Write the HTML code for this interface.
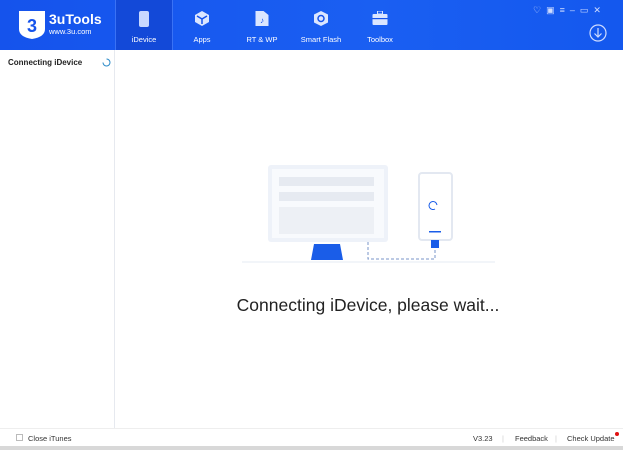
<!DOCTYPE html>
<html><head><style>
*{margin:0;padding:0;box-sizing:border-box}
body{width:623px;height:450px;overflow:hidden;background:#fff;font-family:"Liberation Sans",sans-serif;position:relative}
.hdr{position:absolute;left:0;top:0;width:623px;height:50px;background:linear-gradient(90deg,#1553ec,#1a5ff2 60%,#1458ee)}
.tab{position:absolute;top:0;height:50px;color:#fff;font-size:7.5px;text-align:center}
.tab span{position:absolute;top:35px;left:0;right:0}
.ic{position:absolute;top:11px;left:50%;transform:translateX(-50%)}
.side{position:absolute;left:0;top:50px;width:115px;height:378px;border-right:1px solid #e6e9ef}
.foot{position:absolute;left:0;top:428px;width:623px;height:18px;border-top:1px solid #eee;font-size:7.5px;color:#333}
.shadow{position:absolute;left:0;top:446px;width:623px;height:4px;background:#d8d8d8}
</style></head><body>
<div class="hdr">
 <svg style="position:absolute;left:18px;top:10px" width="28" height="30" viewBox="0 0 28 30"><path d="M1 1H27V19Q27 27 14 29Q1 27 1 19Z" fill="#fff"/><text x="14" y="22" font-size="18" font-weight="bold" fill="#1553ec" text-anchor="middle" font-family="Liberation Sans">3</text></svg>
 <div style="position:absolute;left:49px;top:11px;color:#fff;font-weight:bold;font-size:14px">3uTools</div>
 <div style="position:absolute;left:49px;top:27px;color:#fff;font-size:7.5px">www.3u.com</div>
 <div class="tab" style="left:115px;width:58px;background:#1349d8;border-left:1px solid #3a72f5;border-right:1px solid #3a72f5"><svg class="ic" width="10" height="16"><rect x="0" y="0" width="10" height="16" rx="2" fill="#c8d8ff"/></svg><span>iDevice</span></div>
 <div class="tab" style="left:178px;width:48px"><svg class="ic" width="14" height="15" viewBox="0 0 14 15"><path d="M7 0L14 4V11L7 15L0 11V4Z" fill="#dbe6ff"/><path d="M2 5L7 8L12 5M7 8V13" stroke="#1553ec" stroke-width="1.5" fill="none"/></svg><span>Apps</span></div>
 <div class="tab" style="left:236px;width:52px"><svg class="ic" width="13" height="15"><path d="M0 0H8L13 4V15H0Z" fill="#dbe6ff"/><text x="6.5" y="12" font-size="8" fill="#1553ec" text-anchor="middle">♪</text></svg><span>RT &amp; WP</span></div>
 <div class="tab" style="left:296px;width:50px"><svg class="ic" width="14" height="15" viewBox="0 0 14 15"><path d="M7 0L14 3.5V11.5L7 15L0 11.5V3.5Z" fill="#dbe6ff"/><circle cx="7" cy="7.5" r="3" fill="none" stroke="#1553ec" stroke-width="1.5"/></svg><span>Smart Flash</span></div>
 <div class="tab" style="left:360px;width:40px"><svg class="ic" width="15" height="14"><rect x="5" y="0" width="5" height="3" fill="none" stroke="#dbe6ff"/><rect x="0" y="3" width="15" height="11" rx="1" fill="#dbe6ff"/><rect x="0" y="7" width="15" height="1.2" fill="#1553ec"/></svg><span>Toolbox</span></div>
 <div style="position:absolute;left:533px;top:5px;color:#cfdcff;font-size:9px;letter-spacing:5px">♡▣≡–▭✕</div>
 <svg style="position:absolute;left:589px;top:24px" width="18" height="18"><circle cx="9" cy="9" r="8" fill="none" stroke="#cfdcff" stroke-width="1.2"/><path d="M9 4V13M5.5 9.5L9 13L12.5 9.5" stroke="#cfdcff" stroke-width="1.2" fill="none"/></svg>
</div>
<div class="side"><div style="position:absolute;left:8px;top:8px;font-size:8px;font-weight:bold;color:#222">Connecting iDevice</div>
<svg style="position:absolute;left:102px;top:8px" width="9" height="9"><path d="M4.5 1A3.5 3.5 0 1 1 1 4.5" stroke="#2a8ac8" fill="none"/></svg></div>
<svg style="position:absolute;left:230px;top:160px" width="270" height="110">
 <rect x="38" y="5" width="120" height="77" rx="3" fill="#eef2f9"/>
 <rect x="42" y="9" width="112" height="69" fill="#f8fafd"/>
 <rect x="49" y="17" width="95" height="9" fill="#e6eaf1"/>
 <rect x="49" y="32" width="95" height="9" fill="#e6eaf1"/>
 <rect x="49" y="47" width="95" height="27" fill="#edf0f5"/>
 <path d="M84 84H110L113 100H81Z" fill="#1a5de8"/>
 <rect x="189" y="13" width="33" height="67" rx="3" fill="#fff" stroke="#e3e8f1" stroke-width="2"/>
 <path d="M207 45A4 4 0 1 0 205 49" stroke="#1a5de8" fill="none"/>
 <rect x="199" y="71" width="12" height="1.5" fill="#1a5de8"/>
 <rect x="201" y="80" width="8" height="8" fill="#1a5de8"/>
 <path d="M138 82V99H205V90" stroke="#7a95c8" stroke-dasharray="3 2" fill="none"/>
 <line x1="12" y1="102" x2="265" y2="102" stroke="#e6ebf3"/>
</svg>
<div style="position:absolute;left:0;width:736px;top:295px;text-align:center;font-size:17.5px;color:#222">Connecting iDevice, please wait...</div>
<div class="foot">
 <div style="position:absolute;left:16px;top:5px;width:7px;height:7px;border:1px solid #bbb"></div>
 <div style="position:absolute;left:28px;top:5px">Close iTunes</div>
 <div style="position:absolute;left:473px;top:5px">V3.23</div>
 <div style="position:absolute;left:502px;top:5px;color:#ccc">|</div>
 <div style="position:absolute;left:515px;top:5px">Feedback</div>
 <div style="position:absolute;left:555px;top:5px;color:#ccc">|</div>
 <div style="position:absolute;left:567px;top:5px">Check Update</div>
 <div style="position:absolute;left:615px;top:3px;width:4px;height:4px;border-radius:50%;background:#e01010"></div>
</div>
<div class="shadow"></div>
</body></html>
